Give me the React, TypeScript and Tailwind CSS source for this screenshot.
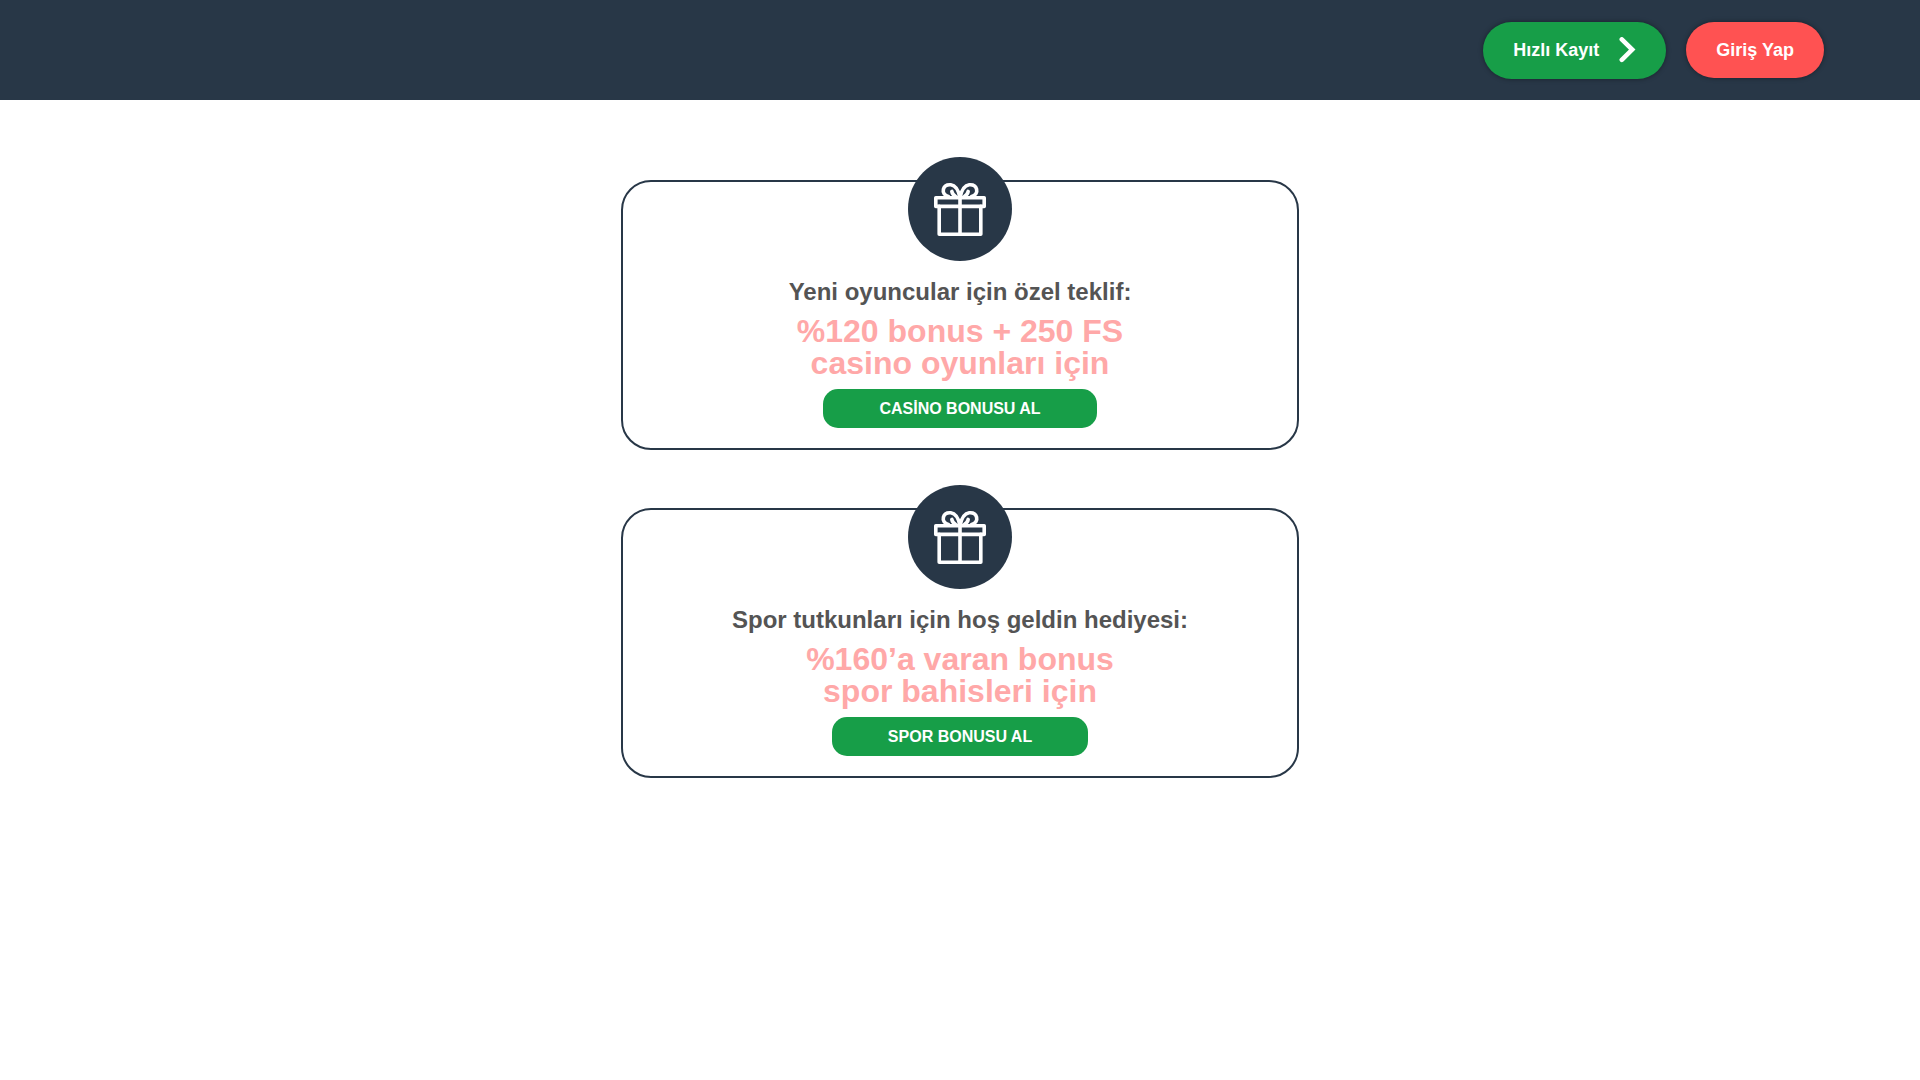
type Offer = {
  title: string;
  lines: [string, string];
  action: string;
};

const offers: Offer[] = [
  {
    title: 'Yeni oyuncular için özel teklif:',
    lines: ['%120 bonus + 250 FS', 'casino oyunları için'],
    action: 'CASİNO BONUSU AL',
  },
  {
    title: 'Spor tutkunları için hoş geldin hediyesi:',
    lines: ['%160’a varan bonus', 'spor bahisleri için'],
    action: 'SPOR BONUSU AL',
  },
];

function GiftIcon() {
  return (
    <svg
      viewBox="0 0 52 54"
      className="h-[54px] w-[52px]"
      fill="none"
      stroke="#ffffff"
      strokeWidth="3.6"
      strokeLinejoin="round"
      strokeLinecap="round"
      aria-hidden="true"
    >
      <rect x="1.8" y="15.8" width="48.4" height="8.6" />
      <path d="M5.2 24.4V52.200H46.8V24.4M26 15.8V52.200" />
      <path d="M14.500 14.600C10.500 13.800 8.600 10.500 9.400 7.300C10.300 3.800 13.500 2.500 16.800 2.800C21.500 3.400 24.500 8.500 26 15.500M17.800 9.400C18.200 11.600 19.500 13.400 22 14.800" />
      <path d="M37.500 14.600C41.500 13.800 43.400 10.500 42.600 7.300C41.700 3.800 38.500 2.500 35.200 2.800C30.500 3.400 27.500 8.500 26 15.500M34.200 9.400C33.800 11.600 32.500 13.400 30 14.800" />
    </svg>
  );
}

function OfferCard({ title, lines, action }: Offer) {
  return (
    <section className="flex w-full flex-col items-center rounded-[30px] border-2 border-[#283747] px-5 pb-5 text-center">
      <div className="-mt-[25px] flex size-[104px] items-center justify-center rounded-full bg-[#283747]">
        <GiftIcon />
      </div>
      <h2 className="mt-[17px] text-2xl leading-7 font-bold text-[#545454]">{title}</h2>
      <p className="mt-[9px] text-[32px] leading-8 font-bold text-[#ffa8a8]">
        {lines[0]}
        <br />
        {lines[1]}
      </p>
      <button
        type="button"
        className="mt-[10px] h-[39px] cursor-pointer rounded-[15px] bg-[#179e48] px-14 text-base font-bold text-white"
      >
        {action}
      </button>
    </section>
  );
}

export default function App() {
  return (
    <div className="min-h-screen bg-white font-['Liberation_Sans',Arial,sans-serif]">
      <header className="flex h-[100px] items-center justify-end gap-5 bg-[#283747] px-[5%]">
        <button
          type="button"
          className="flex h-[57px] cursor-pointer items-center gap-5 rounded-full bg-[#179e48] px-[30px] text-lg font-bold text-white shadow-[0_0_5px_rgba(0,0,0,0.4)]"
        >
          Hızlı Kayıt
          <svg
            viewBox="0 0 17 26"
            className="h-[26px] w-[17px]"
            fill="none"
            stroke="#ffffff"
            strokeWidth="4.600"
            strokeLinecap="round"
            aria-hidden="true"
          >
            <path d="M2.800 2.400L13.200 12.600L2.800 22.800" />
          </svg>
        </button>
        <button
          type="button"
          className="h-14 cursor-pointer rounded-full bg-[#ff5252] px-[30px] text-lg font-bold text-white shadow-[0_0_5px_rgba(0,0,0,0.4)]"
        >
          Giriş Yap
        </button>
      </header>
      <main className="mx-auto flex max-w-[718px] flex-col gap-[58px] px-5 py-20">
        {offers.map((offer) => (
          <OfferCard key={offer.action} {...offer} />
        ))}
      </main>
    </div>
  );
}
